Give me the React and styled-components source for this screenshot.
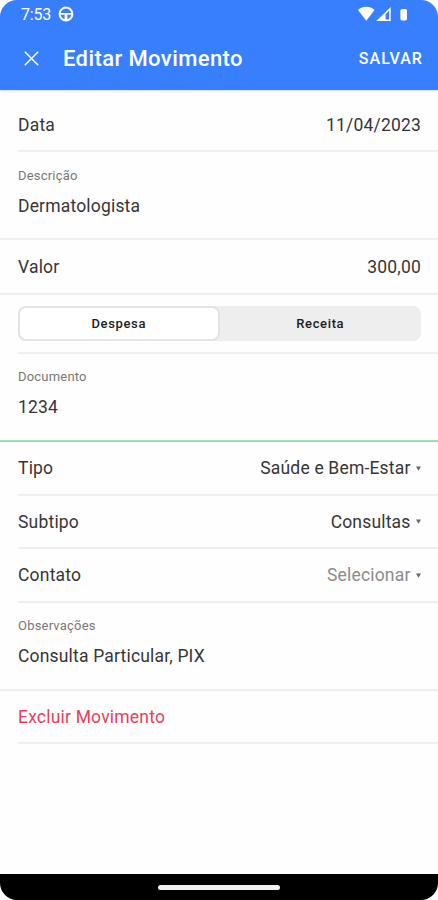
import React, { useState } from 'react'
import styled, { createGlobalStyle } from 'styled-components'

const GlobalStyle = createGlobalStyle`
  * {
    box-sizing: border-box;
  }

  body {
    margin: 0;
    background: #fff;
    font-family: Roboto, "Liberation Sans", sans-serif;
  }

  button {
    margin: 0;
    padding: 0;
    border: 0;
    background: none;
    font: inherit;
    color: inherit;
    cursor: pointer;
  }
`

const Phone = styled.div`
  display: flex;
  flex-direction: column;
  width: 438px;
  height: 900px;
  overflow: hidden;
  background: #fefefe;
  border-radius: 17px;
`

const Header = styled.header`
  height: 90px;
  flex: none;
  color: #fff;
  background: #387ffe;
  box-shadow: 0 1px 2px rgba(0, 0, 0, .16);
`

const StatusBar = styled.div`
  display: flex;
  align-items: center;
  height: 28px;
  padding: 0 30px 0 21px;
  font-size: 16px;

  .clock {
    width: 37px;
    letter-spacing: -.2px;
  }

  .signals {
    display: block;
    margin-left: auto;
  }
`

const NavBar = styled.div`
  display: flex;
  align-items: center;
  height: 60px;
  padding: 0 15px 0 24px;

  .close {
    display: flex;
  }

  h1 {
    margin: 0 auto 0 24px;
    font-size: 22px;
    font-weight: 500;
    letter-spacing: .4px;
  }
`

const Save = styled.button`
  font-size: 16px !important;
  font-weight: 500 !important;
  letter-spacing: 1.05px;
`

const Item = styled.div`
  height: ${({ $height }) => $height}px;
  flex: none;
  padding-left: ${({ $full }) => ($full ? 0 : 18)}px;
`

const ItemInner = styled.div`
  display: flex;
  height: 100%;
  flex-direction: ${({ $stacked }) => ($stacked ? 'column' : 'row')};
  align-items: ${({ $stacked }) => ($stacked ? 'flex-start' : 'center')};
  justify-content: ${({ $stacked }) => ($stacked ? 'flex-start' : 'space-between')};
  padding: ${({ $top = 0 }) => $top}px 17px 0 ${({ $full }) => ($full ? 18 : 0)}px;
  border-bottom: 2px solid ${({ $active }) => ($active ? '#98e0ae' : '#efefef')};
`

const Label = styled.span`
  font-size: 17.5px;
  line-height: 24px;
  letter-spacing: .2px;
  color: ${({ $danger }) => ($danger ? '#e5415b' : '#363636')};
`

const SmallLabel = styled.label`
  font-size: 13px;
  line-height: 18px;
  letter-spacing: .2px;
  color: #777;
`

const Value = styled.span`
  display: flex;
  align-items: center;
  gap: 5.5px;
  margin-top: ${({ $below }) => ($below ? 9 : 0)}px;
  font-size: 17.5px;
  line-height: 24px;
  letter-spacing: .18px;
  color: ${({ $muted }) => ($muted ? '#8b8b8b' : '#363636')};
`

const Segment = styled.div`
  display: flex;
  width: 403px;
  height: 35px;
  background: #eee;
  border-radius: 8px;
`

const SegmentButton = styled.button`
  flex: 1;
  border: 2px solid ${({ $selected }) => ($selected ? '#e3e3e3' : 'transparent')} !important;
  border-radius: 8px;
  background: ${({ $selected }) => ($selected ? '#fff' : 'transparent')} !important;
  font-size: 13px !important;
  font-weight: 500 !important;
  letter-spacing: .65px;
  color: #1c1c1c;
`

const HomeBar = styled.div`
  display: flex;
  justify-content: center;
  height: 26px;
  margin-top: auto;
  padding-top: 11px;
  background: #000;

  span {
    width: 122px;
    height: 5px;
    border-radius: 3px;
    background: #f1f1f1;
  }
`

const WheelIcon = () => (
    <svg width="16" height="16" viewBox="0 0 16 16" fill="none" stroke="#fff">
        <circle cx="8" cy="8" r="6.4" strokeWidth="2"/>
        <path d="M2 7.8h12" strokeWidth="1.8"/>
        <path d="M8 8v6" strokeWidth="2.8"/>
    </svg>
)

const SignalIcons = () => (
    <svg className={'signals'} width="50" height="16" viewBox="0 0 50 16" fill="#fff">
        <path d="M0 4C4.7-.2 11.9-.2 16.6 4L8.3 14.8z"/>
        <path fillRule="evenodd" d="M32.7 1v14H18.2zM31.2 4.6v8.9H27.6V8.6z"/>
        <rect x="42.4" y="3" width="6.6" height="11.4" rx="1.6"/>
    </svg>
)

const CloseIcon = () => (
    <svg width="15" height="15" viewBox="0 0 15 15" fill="none" stroke="#fff" strokeWidth="1.5">
        <path d="M.8.8l13.4 13.4M14.2.8L.8 14.2"/>
    </svg>
)

const Caret = () => (
    <svg width="5" height="5" viewBox="0 0 5 5" fill="#666">
        <path d="M0 .5h5L2.5 4.8z"/>
    </svg>
)

const Row = ({ label, value, height, top, full, select, muted, danger }) => (
    <Item $height={height} $full={full}>
        <ItemInner $full={full} $top={top}>
            <Label $danger={danger}>{label}</Label>
            {value && <Value $muted={muted}>{value}{select && <Caret/>}</Value>}
        </ItemInner>
    </Item>
)

const Field = ({ label, value, height, top, active }) => (
    <Item $height={height} $full>
        <ItemInner $stacked $full $top={top} $active={active}>
            <SmallLabel>{label}</SmallLabel>
            <Value $below>{value}</Value>
        </ItemInner>
    </Item>
)

const App = () => {

    const [kind, setKind] = useState('Despesa')

    return (
        <>
            <GlobalStyle/>
            <Phone>
                <Header>
                    <StatusBar>
                        <span className={'clock'}>7:53</span>
                        <WheelIcon/>
                        <SignalIcons/>
                    </StatusBar>
                    <NavBar>
                        <button className={'close'} aria-label="Fechar"><CloseIcon/></button>
                        <h1>Editar Movimento</h1>
                        <Save>SALVAR</Save>
                    </NavBar>
                </Header>
                <Row label="Data" value="11/04/2023" height={62} top={10}/>
                <Field label="Descrição" value="Dermatologista" height={88} top={15}/>
                <Row label="Valor" value="300,00" height={55} full/>
                <Item $height={59}>
                    <ItemInner>
                        <Segment>
                            {['Despesa', 'Receita'].map(name => (
                                <SegmentButton key={name} $selected={kind === name} onClick={() => setKind(name)}>
                                    {name}
                                </SegmentButton>
                            ))}
                        </Segment>
                    </ItemInner>
                </Item>
                <Field label="Documento" value="1234" height={88} top={14} active/>
                <Row label="Tipo" value="Saúde e Bem-Estar" height={54} select/>
                <Row label="Subtipo" value="Consultas" height={53} select/>
                <Row label="Contato" value="Selecionar" height={54} select muted/>
                <Field label="Observações" value="Consulta Particular, PIX" height={88} top={14}/>
                <Row label="Excluir Movimento" height={53} danger/>
                <HomeBar><span/></HomeBar>
            </Phone>
        </>
    )
}


export default App
